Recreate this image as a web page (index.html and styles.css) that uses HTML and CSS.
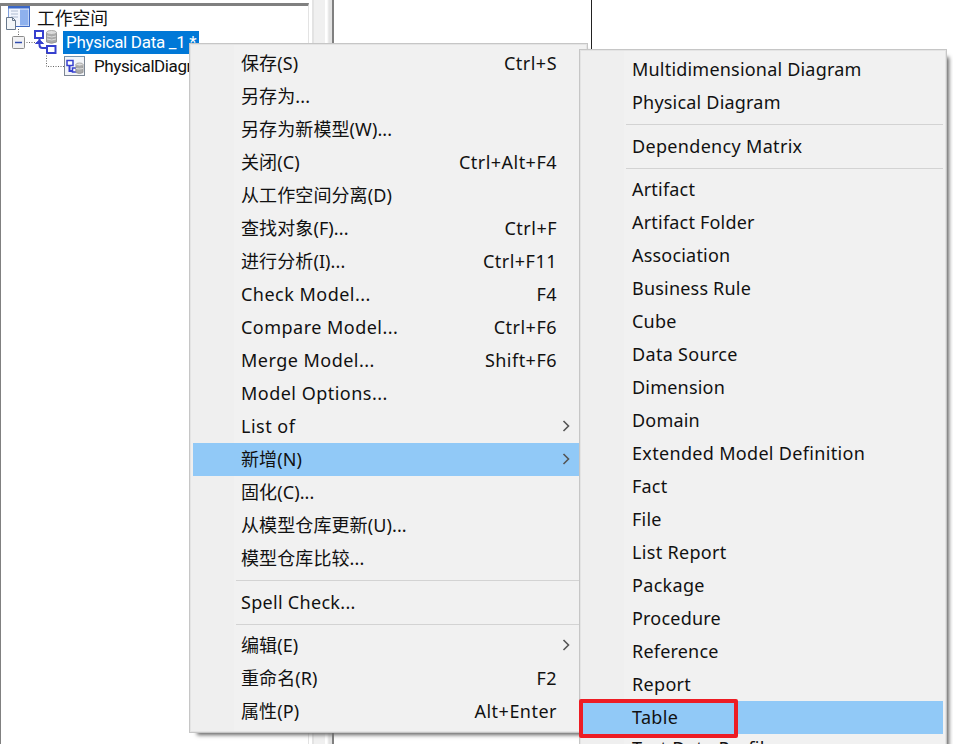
FILE: index.html
```
<!DOCTYPE html>
<html lang="zh-CN">
<head>
<meta charset="utf-8">
<title>工作空间</title>
<link rel="stylesheet" href="styles.css">
</head>
<body>
<div class="app">
  <aside class="tree">
    <div class="node root">
      <svg class="ic-root" width="27" height="26" viewBox="0 0 27 26"><path d="M3.500 1.500h21v20h-21z" fill="#f1f5fd" stroke="#7f9fdc"/><path d="M3 1h22v2.500H3z" fill="#3b68c8"/><path d="M15 4.500h8.500v16H15z" fill="#8eb1ee"/><path d="M24.500 3v18.500H10" fill="none" stroke="#3f6ac4"/><path d="M6 6h7M6 9h7M6 12h7" stroke="#aebbd0"/><path d="M1.500 12.500h6l3 3v9h-9z" fill="#f3f6f9" stroke="#68788c"/><path d="M7.500 12.500v3h3" fill="none" stroke="#68788c"/></svg>
      <span class="root-label">工作空间</span>
    </div>
    <div class="node model">
      <svg class="ic-model" width="51" height="26" viewBox="0 0 51 26"><path d="M9.500 0v7M15 13.500h11" stroke="#666" stroke-dasharray="1 1.500"/><rect x="3.500" y="7.500" width="12" height="12" rx="1" fill="#f1f1f3" stroke="#8c8c8c"/><path d="M6 13.500h7" stroke="#304cae" stroke-width="1.500"/><g fill="#fff" stroke="#3640ce" stroke-width="2"><path d="M30.500 9v7q0 3 3 3h4" fill="none"/><rect x="26" y="2" width="8" height="7"/><rect x="38" y="17" width="8.500" height="7"/></g><path d="M26.500 14.500l4-3.500 4 3.500z" fill="#3640ce" stroke="#3640ce"/><path d="M37.500 3v10q5 2.500 10 0V3" fill="#aaa" stroke="#999"/><ellipse cx="42.500" cy="3.500" rx="5" ry="2" fill="#ddd" stroke="#aaa"/><path d="M38 7q5 2 9 0M38 10q5 2 9 0" fill="none" stroke="#ddd"/></svg>
      <span class="model-label">Physical Data _1 *</span>
    </div>
    <div class="node diagram">
      <svg class="ic-diagram" width="40" height="26" viewBox="0 0 40 26"><path d="M.5 0v13.500H18" fill="none" stroke="#666" stroke-dasharray="1 1.500"/><rect x="18.500" y="3.500" width="20" height="19" fill="#f2f4f8" stroke="#7d8794"/><path d="M18 3.500h21" stroke="#7593ae"/><path d="M23.500 12v6h6" fill="none" stroke="#3640ce" stroke-width="2"/><rect x="21" y="7.500" width="6" height="5" fill="#fff" stroke="#3640ce" stroke-width="1.500"/><rect x="26.500" y="15" width="4" height="4" fill="#fff" stroke="#3640ce" stroke-width="1.500"/><path d="M30 11.500v8q3.500 2 7 0v-8" fill="#aaa" stroke="#999"/><ellipse cx="33.500" cy="11.500" rx="3.500" ry="1.500" fill="#ddd" stroke="#aaa"/><path d="M30 15.500q3 1 7 0" fill="none" stroke="#ddd"/></svg>
      <span class="diagram-label">PhysicalDiagram_1</span>
    </div>
  </aside>
  <div class="splitter"></div>
  <main class="canvas"><div class="page-edge"></div></main>
</div>

<nav class="menu main-menu">
  <div class="item zh"><span>保存(S)</span><kbd>Ctrl+S</kbd></div>
  <div class="item zh"><span>另存为...</span></div>
  <div class="item zh"><span>另存为新模型(W)...</span></div>
  <div class="item zh"><span>关闭(C)</span><kbd>Ctrl+Alt+F4</kbd></div>
  <div class="item zh"><span>从工作空间分离(D)</span></div>
  <div class="item zh"><span>查找对象(F)...</span><kbd>Ctrl+F</kbd></div>
  <div class="item zh"><span>进行分析(I)...</span><kbd>Ctrl+F11</kbd></div>
  <div class="item"><span>Check Model...</span><kbd>F4</kbd></div>
  <div class="item"><span>Compare Model...</span><kbd>Ctrl+F6</kbd></div>
  <div class="item"><span>Merge Model...</span><kbd>Shift+F6</kbd></div>
  <div class="item"><span>Model Options...</span></div>
  <div class="item parent"><span>List of</span><svg class="arrow" width="8" height="12" viewBox="0 0 8 12"><path d="M1.500 1l5 5-5 5"/></svg></div>
  <div class="item zh parent active"><span>新增(N)</span><svg class="arrow" width="8" height="12" viewBox="0 0 8 12"><path d="M1.500 1l5 5-5 5"/></svg></div>
  <div class="item zh"><span>固化(C)...</span></div>
  <div class="item zh"><span>从模型仓库更新(U)...</span></div>
  <div class="item zh"><span>模型仓库比较...</span></div>
  <div class="separator"></div>
  <div class="item snug"><span>Spell Check...</span></div>
  <div class="separator"></div>
  <div class="item zh parent"><span>编辑(E)</span><svg class="arrow" width="8" height="12" viewBox="0 0 8 12"><path d="M1.500 1l5 5-5 5"/></svg></div>
  <div class="item zh"><span>重命名(R)</span><kbd>F2</kbd></div>
  <div class="item zh"><span>属性(P)</span><kbd>Alt+Enter</kbd></div>
</nav>

<nav class="menu sub-menu">
  <div class="item"><span>Multidimensional Diagram</span></div>
  <div class="item"><span>Physical Diagram</span></div>
  <div class="separator"></div>
  <div class="item wide"><span>Dependency Matrix</span></div>
  <div class="separator"></div>
  <div class="item"><span>Artifact</span></div>
  <div class="item"><span>Artifact Folder</span></div>
  <div class="item"><span>Association</span></div>
  <div class="item"><span>Business Rule</span></div>
  <div class="item"><span>Cube</span></div>
  <div class="item wide"><span>Data Source</span></div>
  <div class="item"><span>Dimension</span></div>
  <div class="item"><span>Domain</span></div>
  <div class="item wide"><span>Extended Model Definition</span></div>
  <div class="item"><span>Fact</span></div>
  <div class="item"><span>File</span></div>
  <div class="item wide"><span>List Report</span></div>
  <div class="item wide"><span>Package</span></div>
  <div class="item"><span>Procedure</span></div>
  <div class="item"><span>Reference</span></div>
  <div class="item wide"><span>Report</span></div>
  <div class="item active wide"><span>Table</span></div>
  <div class="item last"><span>Test Data Profile</span></div>
</nav>
<div class="highlight-box"></div>
</body>
</html>
```
FILE: styles.css
```
* { box-sizing: border-box; }
body {
  margin: 0;
  width: 953px;
  height: 744px;
  overflow: hidden;
  position: relative;
  background: #fff;
  color: #111;
  font-family: "Noto Sans", "Noto Sans CJK SC", sans-serif;
}
.app { display: flex; height: 744px; }
.tree {
  width: 309px;
  margin-top: 3px;
  border-top: 3px solid #808080;
  border-left: 1px solid #808080;
  border-right: 1px solid #e3e3e3;
  background: #fff;
  overflow: hidden;
}
.node { display: flex; align-items: center; height: 24px; white-space: nowrap; }
.node svg { flex: none; }
.root { padding-left: 4px; }
.root-label {
  font-family: "Noto Sans CJK SC", sans-serif;
  font-size: 17.8px;
  line-height: 22px;
  height: 24px;
  margin-left: 5px;
}
.model { padding-left: 8px; }
.model-label {
  margin-left: 3px;
  width: 136px;
  height: 23px;
  padding-left: 3px;
  background: #0078d7;
  color: #fff;
  font: 17px/23px Roboto, sans-serif;
  letter-spacing: -0.3px;
}
.diagram { padding-left: 45px; }
.diagram-label { margin-left: 8px; font: 17px/24px Roboto, sans-serif; letter-spacing: -0.4px; }
.splitter {
  width: 25px;
  border-left: 3px solid #fff;
  border-right: 2px solid #808080;
  background: linear-gradient(90deg, #e3e3e3 0 2px, #f0f0f0 2px 13px, #fff 13px 15px, #e3e3e3 17px);
}
.canvas { flex: 1; display: flex; }
.page-edge { width: 258px; border-right: 1px solid #222; }

.menu {
  position: absolute;
  border: 1px solid #c6c6c6;
  padding: 3px;
  background: linear-gradient(90deg, #efefef 44px, #f1f1f1 44px);
}
.main-menu {
  left: 189px;
  top: 43px;
  width: 399px;
  height: 690px;
  box-shadow: inset 0 0 0 1px #e4e4e4, 5px 5px 4px -3px #666;
}
.sub-menu {
  left: 579px;
  top: 49px;
  width: 368px;
  height: 720px;
  box-shadow: inset 0 0 0 1px #e4e4e4, 5px 5px 4px -3px #666;
}
.item {
  display: flex;
  align-items: center;
  justify-content: space-between;
  height: 33px;
  padding: 0 27px 1px 49px;
  font-size: 18px;
  line-height: 32px;
  letter-spacing: 0.2px;
  white-space: nowrap;
}
.wide { letter-spacing: 0.32px; }
.main-menu .item { padding-left: 48px; letter-spacing: 0.48px; }
.main-menu .snug { letter-spacing: 0.3px; }
.main-menu .zh span { letter-spacing: 0.1px; }
.item kbd { font: inherit; }
.main-menu .parent { padding-right: 14px; }
.sub-menu .last { padding-bottom: 5px; letter-spacing: 0.32px; }
.active { background: #91c9f7; }
.arrow { fill: none; stroke: #555; stroke-width: 1.6; }
.separator { height: 10.5px; padding: 5px 0 4px 43px; }
.separator::before { content: ""; display: block; height: 1px; background: #d3d3d3; }
.highlight-box {
  position: absolute;
  left: 579px;
  top: 699px;
  width: 159px;
  height: 39px;
  border: 4px solid #ed1c24;
  border-radius: 2px;
}
```
